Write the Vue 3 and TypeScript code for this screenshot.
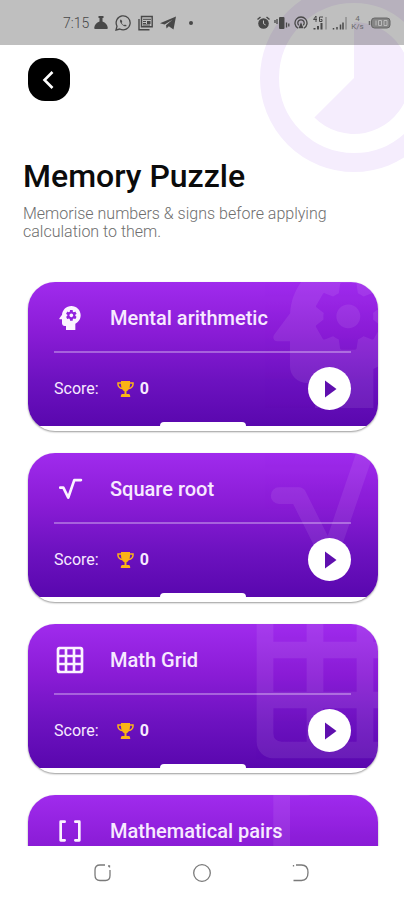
<script setup lang="ts">
interface Shape {
  d: string
  stroked: boolean
}

interface Exercise {
  id: string
  title: string
  score: number
  icon: Shape
}

const exercises: Exercise[] = [
  {
    id: 'mental',
    title: 'Mental arithmetic',
    score: 0,
    icon: {
      stroked: false,
      d: 'M13 8.57c-.79 0-1.43.64-1.43 1.43s.64 1.43 1.43 1.43 1.43-.64 1.43-1.43-.64-1.43-1.43-1.43zM13 3C9.25 3 6.2 5.94 6.02 9.64L4.1 12.2c-.25.33-.01.8.4.8H6v3c0 1.1.9 2 2 2h1v3h7v-4.68c2.36-1.12 4-3.53 4-6.32 0-3.87-3.13-7-7-7zm3 7c0 .13-.01.26-.02.39l.83.66c.08.06.1.16.05.25l-.8 1.39c-.05.09-.16.12-.24.09l-.99-.4c-.21.16-.43.29-.67.39L14 13.83c-.01.1-.1.17-.2.17h-1.6c-.1 0-.18-.07-.2-.17l-.15-1.06c-.25-.1-.47-.23-.68-.39l-.99.4c-.09.03-.2 0-.25-.09l-.8-1.39c-.05-.08-.03-.19.05-.25l.84-.66c-.01-.13-.02-.26-.02-.39s.02-.27.04-.39l-.85-.66c-.08-.06-.1-.16-.05-.26l.8-1.38c.05-.09.15-.12.24-.09l1 .4c.2-.15.43-.29.67-.39L12 6.17c.02-.1.1-.17.2-.17h1.6c.1 0 .18.07.2.17l.15 1.06c.24.1.46.23.67.39l1-.4c.09-.03.2 0 .24.09l.8 1.38c.05.09.03.2-.05.26l-.85.66c.03.12.04.25.04.39z',
    },
  },
  {
    id: 'root',
    title: 'Square root',
    score: 0,
    icon: { stroked: true, d: 'M4.7 11H7l3.7 7.4L15.2 5.3h5' },
  },
  {
    id: 'grid',
    title: 'Math Grid',
    score: 0,
    icon: {
      stroked: false,
      d: 'M20 2H4c-1.1 0-2 .9-2 2v16c0 1.1.9 2 2 2h16c1.1 0 2-.9 2-2V4c0-1.1-.9-2-2-2zM8 20H5q-1 0-1-1v-3h4v4zm0-6H4v-4h4v4zm0-6H4V5q0-1 1-1h3v4zm6 12h-4v-4h4v4zm0-6h-4v-4h4v4zm0-6h-4V4h4v4zm5 12h-3v-4h4v3q0 1-1 1zm1-6h-4v-4h4v4zm0-6h-4V4h3q1 0 1 1v3z',
    },
  },
  {
    id: 'pairs',
    title: 'Mathematical pairs',
    score: 0,
    icon: { stroked: true, d: 'M8 5H5v14h3M16 5h3v14h-3' },
  },
]
</script>

<template>
  <div class="screen">
    <svg class="timer" viewBox="0 0 188 188" aria-hidden="true">
      <circle cx="94" cy="94" r="84.5" fill="none" stroke="currentColor" stroke-width="19" />
      <path d="M94 94V38a56 56 0 1 1-39.6 95.6z" fill="currentColor" />
    </svg>

    <div class="status">
      <div class="status-left">
        <span class="time">7:15</span>
        <svg width="14" height="16" viewBox="0 0 14 16" fill="currentColor">
          <path d="M4.5 1h5v2h-1v3.5c3 .8 5 3.5 5.3 6.5q0 1-1 1H1.2q-1 0-1-1C.5 10 2.5 7.3 5.5 6.5V3h-1z" />
        </svg>
        <svg width="16" height="16" viewBox="0 0 16 16" fill="none" stroke="currentColor" stroke-width="1.3">
          <path d="M1 15l1-3.8A7 7 0 1 1 4.8 14z" />
          <path d="M5.5 4.5c-1 1-.5 3 1.5 5s4 2.3 4.8 1.2l-1.8-1.3-1 .8c-1-.4-2-1.4-2.4-2.4l.7-.9-.8-1.9z" fill="currentColor" stroke="none" />
        </svg>
        <svg width="15" height="16" viewBox="0 0 15 16" fill="none" stroke="currentColor" stroke-width="1.4">
          <path d="M3.5 1.5h10.7v10.3H3.5zM1 4v10.8h10.5" />
          <path d="M5 4.3h8M5 6.5h3M5 8.5h3M5 10h7" stroke-width="1" />
          <path d="M9 6h3.5v3H9z" fill="currentColor" stroke="none" />
        </svg>
        <svg width="17" height="16" viewBox="0 0 17 16" fill="currentColor">
          <path d="M0 8.3L16 1.5 13.5 14.5 8.8 11.2 6.5 13.6 6 10.2 12.5 4.8 4.6 9.6z" />
        </svg>
        <span class="dot"></span>
      </div>
      <div class="status-right">
        <svg width="13" height="14" viewBox="0 0 13 14">
          <circle cx="6.5" cy="7.5" r="5.3" fill="currentColor" />
          <path d="M.5 3.5L3.5 1M12.5 3.5L9.5 1" stroke="currentColor" stroke-width="1.5" />
          <path d="M6.5 4.5v3.2l2.2 1.3" stroke="#bfbfbf" fill="none" />
        </svg>
        <svg width="16" height="14" viewBox="0 0 16 14" fill="none" stroke="currentColor" stroke-width="1.3">
          <rect x="5" y="1" width="5.5" height="12" rx="1" fill="currentColor" stroke="none" />
          <path d="M3 3v5M1 4v3M12.5 6.5v5M14.8 7.5v3" />
        </svg>
        <svg width="14" height="14" viewBox="0 0 14 14" fill="none" stroke="currentColor" stroke-width="1.3">
          <path d="M4 12.2a6 6 0 1 1 6 0" />
          <path d="M4.8 9.3a3.2 3.2 0 1 1 4.4 0" />
          <path d="M7 6.3l2.5 6h-5z" fill="currentColor" stroke="none" />
        </svg>
        <svg width="16" height="16" viewBox="0 0 16 16" fill="none" stroke="currentColor">
          <path d="M2.5 13v1.5M6 11v3.5M9.5 8v6.5" stroke-width="2" />
          <path d="M14 2v12.5" stroke-width="1" opacity=".6" />
          <path d="M4 1L1.5 4.5h3.5M4 1v6M11 2H7.5v4.5H10V4.5H8.5" stroke-width="1" />
        </svg>
        <svg width="15" height="16" viewBox="0 0 15 16" fill="none" stroke="currentColor">
          <path d="M1.5 13v1.5M5 12v2.5M8.5 9.5v5M11 7.5v7" stroke-width="1.5" />
          <path d="M14 2v12.5" stroke-width="1" opacity=".6" />
        </svg>
        <span class="speed"><span>4</span><span>K/s</span></span>
        <svg width="23" height="12" viewBox="0 0 23 12">
          <path d="M1.5 4v4" stroke="currentColor" stroke-width="1.5" opacity=".7" />
          <rect x="3.5" y="1" width="18.5" height="10" rx="3" fill="#858585" stroke="#666" />
          <path d="M8 3.5v5M10.5 3.5h3v5h-3zM16 3.5h3v5h-3z" fill="none" stroke="#bbb" />
        </svg>
      </div>
    </div>

    <main class="content">
      <header class="intro">
        <button class="back" type="button" aria-label="Back">
          <svg width="24" height="24" viewBox="0 0 24 24" fill="none" stroke="#fff" stroke-width="2.6">
            <path d="M15.5 4L7.5 12l8 8" />
          </svg>
        </button>
        <h1>Memory Puzzle</h1>
        <p>Memorise numbers &amp; signs before applying calculation to them.</p>
      </header>

      <section class="cards">
        <article v-for="item in exercises" :key="item.id" class="card">
          <div class="face">
            <svg class="mark" :class="{ stroked: item.icon.stroked }" viewBox="0 0 24 24" aria-hidden="true">
              <path :d="item.icon.d" />
            </svg>
            <div class="top">
              <svg class="icon" :class="{ stroked: item.icon.stroked }" viewBox="0 0 24 24" aria-hidden="true">
                <path :d="item.icon.d" />
              </svg>
              <h2>{{ item.title }}</h2>
            </div>
            <div class="rule"></div>
            <div class="bottom">
              <span class="label">Score:</span>
              <svg class="trophy" viewBox="0 0 17 16" aria-hidden="true">
                <path d="M4 0h9v3.5c0 3.8-1.6 6-3.5 6.8V13H12q1.2.6 1.2 2v1H3.8v-1q0-1.4 1.2-2h2.5v-2.7C5.6 9.5 4 7.3 4 3.5z" />
                <path class="handle" d="M4 2H1v1.5Q1.3 6.8 5.3 7.6M13 2h3v1.5q-.3 3.3-4.3 4.1" />
              </svg>
              <span class="score">{{ item.score }}</span>
              <button class="play" type="button" :aria-label="'Play ' + item.title">
                <svg width="14" height="18" viewBox="0 0 14 18"><path d="M2 .5L13.5 9 2 17.5z" fill="#5f0fae" /></svg>
              </button>
            </div>
            <span class="tab"></span>
          </div>
        </article>
      </section>
    </main>

    <nav class="nav">
      <button type="button" aria-label="Recent apps">
        <svg width="20" height="20" viewBox="0 0 20 20">
          <path d="M12 2H7Q2 2 2 7v5q0 5.5 5 5.5h5.5q4.5 0 4.5-5V7" />
          <path d="M15 3h1.5v1.5" />
        </svg>
      </button>
      <button type="button" aria-label="Home">
        <svg width="20" height="20" viewBox="0 0 20 20"><circle cx="10" cy="10" r="8.3" /></svg>
      </button>
      <button type="button" aria-label="Go back">
        <svg width="20" height="20" viewBox="0 0 20 20">
          <path d="M5 2h5.5Q17 2 17 9.5t-6.5 8H2.5M2.5 2v1.5" />
        </svg>
      </button>
    </nav>
  </div>
</template>

<style>
body {
  margin: 0;
  background: #fff;
}
</style>

<style scoped>
.screen {
  position: relative;
  display: flex;
  flex-direction: column;
  height: 100vh;
  overflow: hidden;
  background: #fff;
  color: #0b0b0b;
  font-family: Roboto, 'Liberation Sans', sans-serif;
}

svg {
  display: block;
  flex: none;
}

button {
  display: grid;
  place-items: center;
  padding: 0;
  border: 0;
  background: none;
  cursor: pointer;
}

.timer {
  position: absolute;
  top: -16px;
  right: -44px;
  width: 188px;
  height: 188px;
  color: #f5edfd;
}

.status {
  position: relative;
  display: flex;
  flex: none;
  align-items: center;
  justify-content: space-between;
  box-sizing: border-box;
  height: 45px;
  padding: 0 13px 0 63px;
  background: rgba(0, 0, 0, 0.25);
  color: #484848;
}

.status-left {
  display: flex;
  align-items: center;
  gap: 7px;
}

.status-right {
  display: flex;
  align-items: center;
  gap: 4px;
}

.time {
  width: 24px;
  font-size: 14px;
  font-weight: 300;
  white-space: nowrap;
}

.dot {
  width: 4px;
  height: 4px;
  margin-left: 5px;
  border-radius: 50%;
  background: currentColor;
}

.speed {
  display: flex;
  flex-direction: column;
  align-items: center;
  width: 13px;
  font-size: 8px;
  line-height: 8px;
  opacity: 0.7;
}

.content {
  position: relative;
  flex: 1;
  min-height: 0;
  overflow-y: auto;
  scrollbar-width: none;
}

.intro {
  padding: 13px 23px 0;
}

.back {
  width: 42px;
  height: 43px;
  margin-left: 5px;
  border-radius: 17px;
  background: #000;
}

h1 {
  margin: 57px 0 0;
  font-size: 32px;
  font-weight: 500;
  line-height: 36px;
}

.intro p {
  max-width: 320px;
  margin: 11px 0 0;
  color: #6e6e6e;
  font-size: 16px;
  font-weight: 300;
  line-height: 18px;
}

.cards {
  display: flex;
  flex-direction: column;
  gap: 22px;
  padding: 41px 26px 24px 28px;
}

.card {
  overflow: hidden;
  padding-bottom: 5px;
  border-radius: 27px;
  background: #fff;
  box-shadow: 0 1px 2px rgba(0, 0, 0, 0.4);
}

.face {
  position: relative;
  overflow: hidden;
  padding: 20px 27px 16px 26px;
  background: linear-gradient(#a02bed, #8a1cd6 35%, #6d12c0 68%, #5907ae);
  color: #f7eaff;
}

.mark {
  position: absolute;
  top: -49px;
  right: -62px;
  width: 200px;
  height: 200px;
  fill: #fff;
  opacity: 0.08;
}

.icon {
  width: 32px;
  height: 32px;
  fill: #fbf3ff;
}

.mark.stroked,
.icon.stroked {
  fill: none;
  stroke: #fbf3ff;
  stroke-width: 2;
  stroke-linecap: round;
  stroke-linejoin: round;
}

.top {
  position: relative;
  display: flex;
  align-items: center;
  gap: 24px;
}

h2 {
  margin: 0;
  font-size: 20px;
  font-weight: 500;
  line-height: 32px;
}

.rule {
  position: relative;
  height: 2px;
  margin: 17px 0 14px;
  background: rgba(255, 255, 255, 0.32);
}

.bottom {
  position: relative;
  display: flex;
  align-items: center;
}

.label,
.score {
  font-size: 16px;
}

.score {
  font-weight: 700;
}

.trophy {
  width: 17px;
  height: 16px;
  margin: 0 6px 0 18px;
  fill: #fbb416;
}

.handle {
  fill: none;
  stroke: #fbb416;
  stroke-width: 1.5;
}

.play {
  width: 43px;
  height: 43px;
  margin-left: auto;
  border-radius: 50%;
  background: #fff;
}

.tab {
  position: absolute;
  bottom: 0;
  left: 50%;
  width: 86px;
  height: 4px;
  border-radius: 6px 6px 0 0;
  background: #fff;
  transform: translateX(-50%);
}

.nav {
  display: flex;
  flex: none;
  align-items: center;
  justify-content: space-around;
  height: 54px;
  padding: 0 54px;
  background: #fff;
}

.nav svg {
  fill: none;
  stroke: #7a7a7a;
  stroke-width: 1.3;
}
</style>
